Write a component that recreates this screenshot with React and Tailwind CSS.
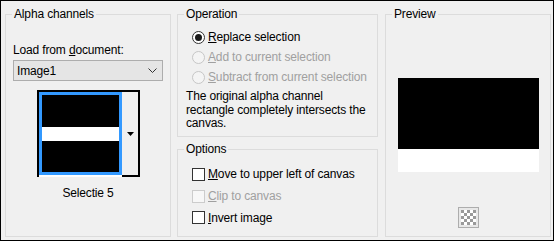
import React from 'react';

function GroupBox({ title, className = '', children }) {
  return (
    <fieldset className={`border border-[#dcdcdc] min-w-0 ${className}`}>
      <legend className="ml-[6px] px-[2px] leading-[14px]">{title}</legend>
      {children}
    </fieldset>
  );
}

function Radio({ checked, disabled, children }) {
  return (
    <div className="h-[20px] flex items-center gap-[3px]">
      <span
        className={`w-[13px] h-[13px] rounded-full border flex items-center justify-center ${
          disabled ? 'border-[#c6c6c6] bg-[#f4f4f4]' : 'border-[#333333] bg-white'
        }`}
      >
        {checked && <span className="w-[7px] h-[7px] rounded-full bg-[#1a1a1a]" />}
      </span>
      <span className={`leading-4 ${disabled ? 'text-[#a0a0a0]' : ''}`}>{children}</span>
    </div>
  );
}

function Check({ disabled, className = 'h-[22px]', children }) {
  return (
    <div className={`${className} flex items-center gap-[3px]`}>
      <span
        className={`w-[13px] h-[13px] border ${
          disabled ? 'border-[#cccccc] bg-[#f7f7f7]' : 'border-[#333333] bg-white'
        }`}
      />
      <span className={`leading-4 ${disabled ? 'text-[#a0a0a0]' : ''}`}>{children}</span>
    </div>
  );
}

function CheckerIcon() {
  const cells = [];
  for (let r = 0; r < 5; r++) {
    for (let c = 0; c < 5; c++) {
      if ((r + c) % 2 === 0) {
        cells.push(<rect key={`${r}-${c}`} x={3 + c * 3} y={3 + r * 3} width="3" height="3" fill="#9a9a9a" />);
      }
    }
  }
  return (
    <svg width="21" height="21" viewBox="0 0 21 21">
      <rect x="0.5" y="0.5" width="20" height="20" fill="#e8e8e8" stroke="#adadad" />
      <rect x="3" y="3" width="15" height="15" fill="#ffffff" />
      {cells}
    </svg>
  );
}

export default function App() {
  return (
    <div
      className="w-[554px] h-[241px] border border-black bg-[#f0f0f0] flex gap-[6px] pt-[6px] pl-[4px] text-[12px] tracking-[-0.15px] text-black"
      style={{ fontFamily: '"Liberation Sans", Arial, sans-serif' }}
    >
      {/* Alpha channels */}
      <GroupBox title="Alpha channels" className="w-[166px] h-[230px]">
        <div className="px-[7px] flex flex-col">
          <p className="mt-[21px] leading-4">
            Load from <span className="underline">d</span>ocument:
          </p>
          <div className="mt-[2px] h-[21px] w-[150px] border border-[#adadad] bg-[#e5e5e5] flex items-center justify-between pl-[3px] pr-[5px]">
            <span className="leading-4">Image1</span>
            <svg width="9" height="5" viewBox="0 0 9 5">
              <polyline points="0.5,0.5 4.5,4.5 8.5,0.5" fill="none" stroke="#333" strokeWidth="1" />
            </svg>
          </div>
          <div className="mt-[9px] ml-[24px] w-[103px] flex border-t-2 border-l-2 border-black">
            <div className="flex flex-col">
              <div className="w-[83px] h-[83px] border-[3px] border-[#3399ff] flex flex-col bg-black">
                <div className="h-[32px] bg-black" />
                <div className="h-[14px] bg-white" />
                <div className="flex-1 bg-black" />
              </div>
              <div className="h-[2px] bg-white" />
            </div>
            <div className="flex-1 h-[85px] border-r-2 border-b-2 border-black bg-[#f0f0f0] flex items-center justify-center">
              <svg width="7" height="4" viewBox="0 0 7 4">
                <polygon points="0,0 7,0 3.5,4" fill="#000" />
              </svg>
            </div>
          </div>
          <p className="mt-[8px] leading-4 text-center">Selectie 5</p>
        </div>
      </GroupBox>

      {/* Middle column */}
      <div className="w-[201px] flex flex-col gap-[5px]">
        <GroupBox title="Operation" className="h-[130px]">
          <div className="pt-[6px] pl-[14px]">
            <Radio checked>
              <span className="underline">R</span>eplace selection
            </Radio>
            <Radio disabled>
              <span className="underline">A</span>dd to current selection
            </Radio>
            <Radio disabled>
              <span className="underline">S</span>ubtract from current selection
            </Radio>
          </div>
          <p className="mt-[3px] pl-[8px] leading-[13.5px]">
            The original alpha channel
            <br />
            rectangle completely intersects the
            <br />
            canvas.
          </p>
        </GroupBox>
        <GroupBox title="Options" className="h-[95px]">
          <div className="pt-[7px] pl-[14px]">
            <Check>
              <span className="underline">M</span>ove to upper left of canvas
            </Check>
            <Check disabled>
              <span className="underline">C</span>lip to canvas
            </Check>
            <Check className="h-[21px]">
              <span className="underline">I</span>nvert image
            </Check>
          </div>
        </GroupBox>
      </div>

      {/* Preview */}
      <GroupBox title="Preview" className="ml-[1px] w-[166px] h-[230px]">
        <div className="flex flex-col items-center">
          <div className="mt-[57px] w-[141px] h-[94px] flex flex-col">
            <div className="h-[71px] bg-black" />
            <div className="flex-1 bg-white" />
          </div>
          <div className="mt-[35px] w-[21px] h-[21px]">
            <CheckerIcon />
          </div>
        </div>
      </GroupBox>
    </div>
  );
}
